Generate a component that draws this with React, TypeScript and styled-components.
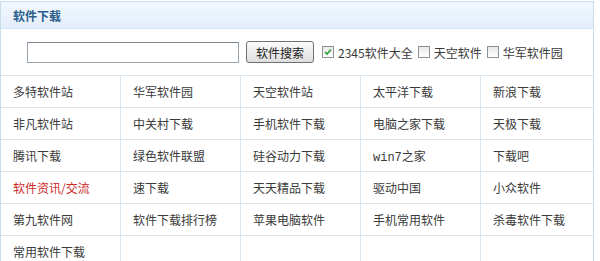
import React from 'react';
import styled, { createGlobalStyle } from 'styled-components';

const GlobalStyle = createGlobalStyle`
  body {
    margin: 0;
    background: #fff;
    font-family: "Noto Sans CJK SC", "Liberation Sans", sans-serif;
  }
`;

const Panel = styled.div`
  width: 592px;
  margin-top: 1px;
  border: 1px solid #c9dcea;
  border-bottom: none;
  background: #fff;
`;

const Header = styled.div`
  height: 26px;
  display: flex;
  align-items: center;
  padding-left: 12px;
  background: linear-gradient(#f1f7fd, #e4eefa);
  border-bottom: 1px solid #d6e5f2;
`;

const Title = styled.h2`
  margin: 0;
  font-size: 12px;
  font-weight: 700;
  color: #2a5d8c;
`;

const SearchRow = styled.div`
  height: 46px;
  display: flex;
  align-items: center;
  padding-left: 26px;
  font-size: 12px;
  color: #3a3a3a;
`;

const Input = styled.input`
  width: 208px;
  height: 17px;
  margin: 0;
  border: 1px solid #9aa4ad;
  border-top-color: #7f8890;
  padding: 1px;
`;

const Button = styled.button`
  margin-left: 7px;
  width: 68px;
  height: 22px;
  padding: 0;
  border: 1px solid #707070;
  border-radius: 3px;
  background: linear-gradient(#fbfbfb, #dedede);
  font-family: "Noto Sans CJK SC", sans-serif;
  font-size: 12px;
  color: #222;
`;

const Option = styled.label<{ $gap: number }>`
  display: flex;
  align-items: center;
  margin-left: ${(p) => p.$gap}px;
  gap: 4px;
`;

const Box = styled.span`
  width: 10px;
  height: 10px;
  border: 1px solid #8a9096;
  background: linear-gradient(#e8e8e8, #fff);
  display: flex;
  align-items: center;
  justify-content: center;
`;

const Grid = styled.div`
  display: grid;
  grid-template-columns: repeat(4, 120px) 1fr;
  border-top: 1px solid #d9e5ef;
`;

const Cell = styled.div<{ $red?: boolean; $mono?: boolean }>`
  height: 31px;
  display: flex;
  align-items: center;
  padding-left: 12px;
  border-right: 1px solid #d9e5ef;
  border-bottom: 1px solid #d9e5ef;
  font-size: 12px;
  color: ${(p) => (p.$red ? '#cc2a2a' : '#3a3a3a')};
  font-family: ${(p) => (p.$mono ? '"Liberation Mono", "Noto Sans CJK SC", monospace' : 'inherit')};
  &:nth-child(5n) {
    border-right: none;
  }
`;

const Check = ({ on }: { on?: boolean }) => (
  <Box>
    {on && (
      <svg width="8" height="8" viewBox="0 0 8 8">
        <path d="M1 4 L3 6 L7 1.5" fill="none" stroke="#2e9a2e" strokeWidth="1.6" />
      </svg>
    )}
  </Box>
);

const links = [
  '多特软件站', '华军软件园', '天空软件站', '太平洋下载', '新浪下载',
  '非凡软件站', '中关村下载', '手机软件下载', '电脑之家下载', '天极下载',
  '腾讯下载', '绿色软件联盟', '硅谷动力下载', 'win7之家', '下载吧',
  '软件资讯/交流', '速下载', '天天精品下载', '驱动中国', '小众软件',
  '第九软件网', '软件下载排行榜', '苹果电脑软件', '手机常用软件', '杀毒软件下载',
  '常用软件下载', '', '', '', '',
];

const App: React.FC = () => {
  return (
    <>
      <GlobalStyle />
      <Panel>
        <Header>
          <Title>软件下载</Title>
        </Header>
        <SearchRow>
          <Input />
          <Button>软件搜索</Button>
          <Option $gap={8}>
            <Check on />
            2345软件大全
          </Option>
          <Option $gap={5}>
            <Check />
            天空软件
          </Option>
          <Option $gap={5}>
            <Check />
            华军软件园
          </Option>
        </SearchRow>
        <Grid>
          {links.map((name, i) => (
            <Cell key={i} $red={name === '软件资讯/交流'} $mono={name === 'win7之家'}>
              {name}
            </Cell>
          ))}
        </Grid>
      </Panel>
    </>
  );
};

export default App;
